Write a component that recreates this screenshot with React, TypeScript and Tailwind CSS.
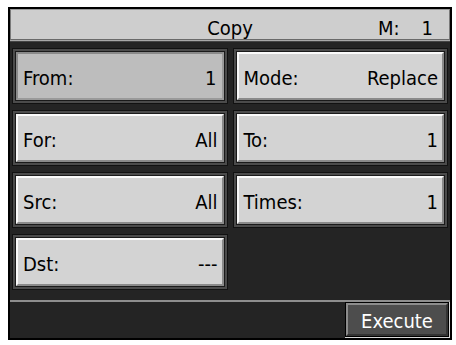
import React from "react";

const font = { fontFamily: '"Liberation Sans Narrow", "DejaVu Sans Condensed", "DejaVu Sans", sans-serif' };

type Cell = { label: string; value: string; selected?: boolean } | null;

const cells: Cell[] = [
  { label: "From:", value: "1", selected: true },
  { label: "Mode:", value: "Replace" },
  { label: "For:", value: "All" },
  { label: "To:", value: "1" },
  { label: "Src:", value: "All" },
  { label: "Times:", value: "1" },
  { label: "Dst:", value: "---" },
  null,
];

function Field({ label, value, selected }: { label: string; value: string; selected?: boolean }) {
  return (
    <div className="h-[56px] border border-[#111] bg-[#4b4b4b] p-[2px]">
      <div className="h-full border border-[#1a1a1a]">
        <div
          className={
            selected
              ? "flex h-full items-center justify-between border-2 border-t-[#8a8a8a] border-l-[#8a8a8a] border-r-[#9a9a9a] border-b-[#9a9a9a] bg-[#bdbdbd] pl-[5px] pr-[5px] pt-[4px] text-black"
              : "flex h-full items-center justify-between border-2 border-t-[#fafafa] border-l-[#fafafa] border-r-[#8a8a8a] border-b-[#8a8a8a] bg-[#d3d3d3] pl-[5px] pr-[4px] pt-[4px] text-black"
          }
        >
          <span className="text-[20px] leading-none">{label}</span>
          <span className="text-[20px] leading-none">{value}</span>
        </div>
      </div>
    </div>
  );
}

export default function App() {
  return (
    <div className="h-[345px] w-[456px] bg-white pl-[8px] pt-[7px]" style={font}>
      <div className="flex h-[333px] w-[444px] flex-col border-2 border-black bg-[#242424]">
        <div className="grid h-[31px] grid-cols-3 items-end border border-t-[#9a9a9a] border-l-[#7a7a7a] border-r-[#7a7a7a] border-b-[#6a6a6a] bg-[#cecece] pb-[1px] text-black">
          <span />
          <span className="text-center text-[20px] leading-none">Copy</span>
          <div className="flex justify-end gap-[22px] pr-[16px] text-[20px] leading-none">
            <span>M:</span>
            <span>1</span>
          </div>
        </div>
        <div className="h-[1px] bg-[#a8a8a8]" />
        <div className="h-[1px] bg-[#444]" />

        <div className="mt-[6px] grid grid-cols-2 gap-x-[5px] gap-y-[6px] px-[2px]">
          {cells.map((c, i) => (c ? <Field key={i} {...c} /> : <div key={i} />))}
        </div>

        <div className="mt-[10px] h-[2px] bg-[#8e8e8e]" />

        <div className="flex flex-1 justify-end">
          <div className="flex h-full w-[105px] border-r border-b border-[#d8d8d8]">
            <div className="flex flex-1 border border-black">
              <div className="flex flex-1 items-center justify-center border-2 border-t-[#8c8c8c] border-l-[#8c8c8c] border-r-[#333] border-b-[#333] bg-[#4d4d4d] pt-[2px] text-[20px] leading-none text-white">
                Execute
              </div>
            </div>
          </div>
        </div>
      </div>
    </div>
  );
}
